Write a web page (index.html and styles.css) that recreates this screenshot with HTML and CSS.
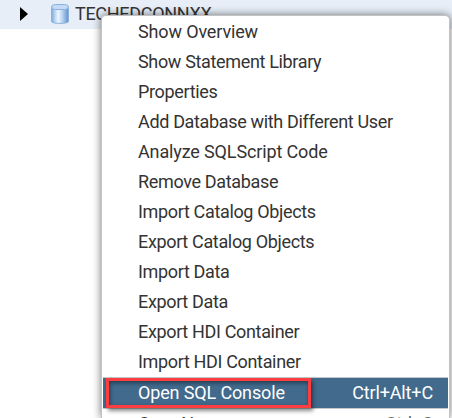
FILE: index.html
```html
<!DOCTYPE html>
<html lang="en">
<head>
<meta charset="utf-8">
<title>Database Explorer</title>
<link rel="stylesheet" href="styles.css">
</head>
<body>
<div class="tree-row">
  <svg class="arrow" width="8" height="14" viewBox="0 0 8 14"><path d="M0 0L8 7L0 14Z"/></svg>
  <svg class="db" width="18" height="20" viewBox="0 0 18 20">
    <defs>
      <linearGradient id="body"><stop offset="0" stop-color="#7aa8dc"/><stop offset=".2" stop-color="#b9d4f0"/><stop offset=".4" stop-color="#eef6fd"/><stop offset=".65" stop-color="#b4d2f0"/><stop offset="1" stop-color="#5f90cb"/></linearGradient>
    </defs>
    <path d="M.5 3V17.500C.5 20 17.500 20 17.500 17.500V3Z" fill="url(#body)" stroke="#8ab1de"/>
    <rect x=".5" y=".5" width="17" height="5" rx="4" ry="2.500" fill="#c3dbf4" stroke="#8ab1de"/>
  </svg>
  <span class="tree-label">TECHEDCONNXX</span>
</div>
<ul class="menu">
  <li class="item wide"><span>Show Overview</span></li>
  <li class="item"><span>Show Statement Library</span></li>
  <li class="item"><span>Properties</span></li>
  <li class="item"><span>Add Database with Different User</span></li>
  <li class="item wide"><span>Analyze SQLScript Code</span></li>
  <li class="item"><span>Remove Database</span></li>
  <li class="item"><span>Import Catalog Objects</span></li>
  <li class="item"><span>Export Catalog Objects</span></li>
  <li class="item"><span>Import Data</span></li>
  <li class="item"><span>Export Data</span></li>
  <li class="item"><span>Export HDI Container</span></li>
  <li class="item"><span>Import HDI Container</span></li>
  <li class="item wide selected"><span>Open SQL Console</span><span class="shortcut">Ctrl+Alt+C</span><i class="callout"></i></li>
  <li class="item"><span>Copy Name</span><span class="shortcut">Ctrl+C</span></li>
</ul>
</body>
</html>
```

FILE: styles.css
```css
* { box-sizing: border-box; }
body {
  margin: 0;
  height: 418px;
  overflow: hidden;
  background: #fff;
  color: #333;
  font: 18px/28px Roboto, "Liberation Sans", sans-serif;
}
.tree-row {
  display: flex;
  align-items: center;
  height: 29px;
  padding-left: 20px;
  background: #e7eef7;
}
.arrow {
  fill: #000;
  margin-bottom: 1px;
}
.db { margin: 0 6px 1px 23px; }
.tree-label {
  letter-spacing: -.3px;
  line-height: 26px;
  padding-bottom: 2px;
}
.menu {
  position: absolute;
  top: 15px;
  left: 101px;
  width: 349px;
  height: 403px;
  overflow: hidden;
  margin: 0;
  padding: 2px 1px 0;
  list-style: none;
  background: #fff;
  border: 1px solid #c2c2c2;
  border-bottom: 0;
  border-radius: 5px 5px 0 0;
  box-shadow: 0 0 9px rgba(0, 0, 0, .55);
}
.item {
  position: relative;
  display: flex;
  justify-content: space-between;
  height: 30px;
  padding: 0 15px 0 35px;
  letter-spacing: -.34px;
}
.wide { letter-spacing: -.14px; }
.shortcut { color: #666; }
.selected {
  color: #fff;
  background: #416a8c;
  line-height: 30px;
  box-shadow: 0 -1px #c4c8cc, 0 1px #c4c8cc;
}
.selected .shortcut { color: #fff; }
.callout {
  position: absolute;
  top: 0;
  left: 3px;
  width: 205px;
  height: 30px;
  border: 3px solid #fd3d40;
  box-shadow: 2px 3px 4px rgba(0, 0, 0, .45), inset 1px 2px 4px rgba(0, 0, 0, .45);
}
.selected + .item { line-height: 31px; }
```
